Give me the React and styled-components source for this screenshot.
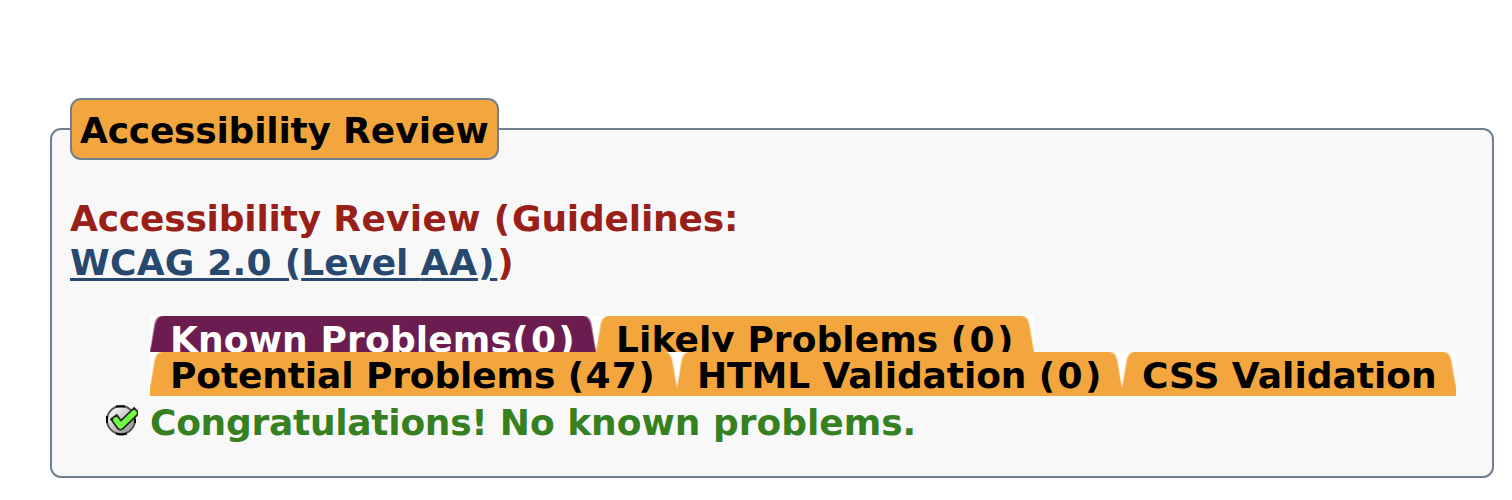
import React from 'react';
import styled, { createGlobalStyle } from 'styled-components';

const GlobalStyle = createGlobalStyle`
  body {
    margin: 0;
    background: #fff;
    color: #000;
    font: bold 36px/44px Verdana, 'DejaVu Sans', sans-serif;
  }
`;

const Page = styled.main`
  padding: 128px 18px 0 50px;
  height: 500px;
  box-sizing: border-box;
  overflow: hidden;
`;

const Panel = styled.section`
  box-sizing: border-box;
  height: 350px;
  padding: 0 18px;
  border: 2px solid #708090;
  border-radius: 11px;
  background: #f8f8f8;
`;

const Legend = styled.div`
  box-sizing: border-box;
  width: 429px;
  height: 62px;
  margin-top: -32px;
  padding: 9px 0 0 8px;
  border: 2px solid #708090;
  border-radius: 11px;
  background: #f3a63e;
`;

const Text = styled.span`
  display: block;
  white-space: nowrap;
`;

const Track = styled.span`
  letter-spacing: ${(p) => p.$by}px;
`;

const Heading = styled.h2`
  margin: 37px 0 0;
  font: inherit;
  color: #982018;
`;

const GuideLink = styled.a`
  color: #28496f;
  text-decoration: underline;
  text-decoration-thickness: 3px;
  text-underline-offset: 3px;
`;

const Tabs = styled.nav`
  margin: 31px 0 0 80px;
`;

const TabRow = styled.div`
  display: flex;
  height: ${(p) => p.$height}px;
  overflow: hidden;
`;

const TabBox = styled.div`
  position: relative;
  flex: none;
  box-sizing: border-box;
  width: ${(p) => p.$width}px;
  height: 44px;
  padding: 2px 0 0 20px;
  background: ${(p) => (p.$active ? '#6c1d4f' : '#f3a63e')};
  color: ${(p) => (p.$active ? '#fff' : '#000')};
`;

const Corner = styled.svg`
  position: absolute;
  top: 0;
  ${(p) => (p.$right ? 'right: 0; transform: scaleX(-1);' : 'left: 0;')}
`;

const Message = styled.div`
  display: flex;
  margin: 5px 0 0 36px;
  gap: 12px;
  color: #358020;
`;

const StatusIcon = styled.svg`
  flex: none;
  margin-top: 4px;
`;

function TabCorner({ right }) {
  return (
    <Corner $right={right} width="14" height="38" viewBox="0 0 14 38">
      <path d="M0 0H13C7.5 1 6 5 5 10L1.5 30L0 37Z" fill="#fff" opacity=".5" />
      <path d="M0 0H9.5C6 1.5 4.6 5 3.8 10L1 28L0 33Z" fill="#fff" />
    </Corner>
  );
}

function Tab({ width, active, track = 0, label, count }) {
  const spread = count && count.length > 1 ? 1.3 : 2.3;
  return (
    <TabBox $width={width} $active={active}>
      <Text>
        <Track $by={track}>{label}</Track>
        {count && <Track $by={spread}>({count})</Track>}
      </Text>
      <TabCorner />
      <TabCorner right />
    </TabBox>
  );
}

function CheckIcon() {
  return (
    <StatusIcon width="32" height="31" viewBox="0 0 32 31">
      <defs>
        <linearGradient id="disc" x1="0" y1="0" x2="1" y2="1">
          <stop offset=".2" stopColor="#f0f0f0" />
          <stop offset=".85" stopColor="#999" />
        </linearGradient>
      </defs>
      <circle cx="15" cy="15" r="14" fill="url(#disc)" stroke="#555" strokeWidth="2" />
      <path d="M10 28.5Q15 30.5 21 28.5M1 11V18M10 1.5H19M29 14V18" fill="none" stroke="#000" strokeWidth="2" />
      <path d="M10 15L14.5 21L28 8" fill="none" stroke="#262626" strokeWidth="9" strokeLinejoin="round" strokeLinecap="square" />
      <path d="M10 15L14.5 21L28 8" fill="none" stroke="#70fa42" strokeWidth="5.5" strokeLinejoin="round" strokeLinecap="round" />
    </StatusIcon>
  );
}

export default function App() {
  return (
    <Page>
      <GlobalStyle />
      <Panel>
        <Legend>
          <Text><Track $by={-0.22}>Accessibility </Track>Review</Text>
        </Legend>
        <Heading>
          <Text>
            <Track $by={-0.2}>Accessibility </Track>
            <Track $by={0.3}>Review </Track>
            <Track $by={2}>(</Track>
            <Track $by={-0.2}>Guidelines:</Track>
          </Text>
          <Text>
            <GuideLink href="#guidelines">
              <Track $by={0.25}>WCAG 2.0 (</Track>
              <Track $by={-0.15}>Level </Track>
              <Track $by={0.8}>AA</Track>
              <Track $by={3}>)</Track>
            </GuideLink>
            )
          </Text>
        </Heading>
        <Tabs>
          <TabRow $height={36}>
            <Tab width={446} track={0.15} label="Known Problems" count="0" active />
            <Tab width={438} track={0.06} label="Likely Problems " count="0" />
          </TabRow>
          <TabRow $height={44}>
            <Tab width={527} track={-0.12} label="Potential Problems " count="47" />
            <Tab width={445} track={-0.1} label="HTML Validation " count="0" />
            <Tab width={334} label="CSS Validation" />
          </TabRow>
        </Tabs>
        <Message>
          <CheckIcon />
          <Text><Track $by={-0.27}>Congratulations! </Track>No known problems.</Text>
        </Message>
      </Panel>
    </Page>
  );
}
